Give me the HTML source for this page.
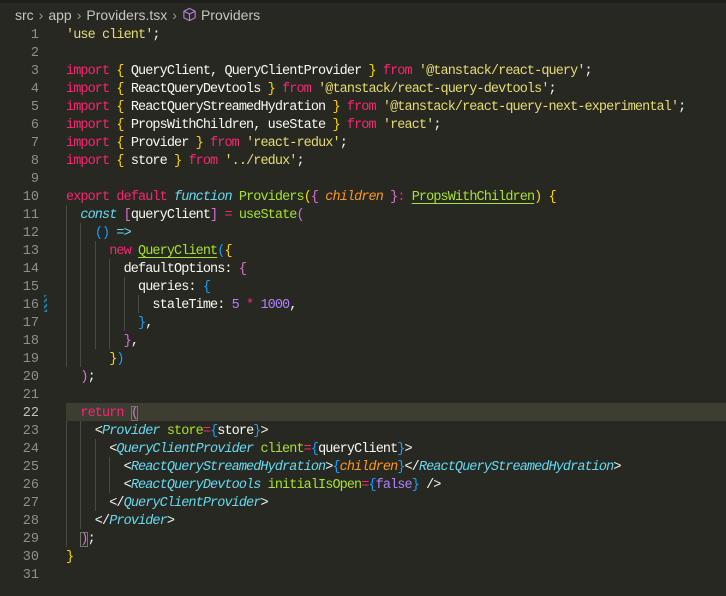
<!DOCTYPE html>
<html><head><meta charset="utf-8"><style>
html,body{margin:0;padding:0;background:#272822;width:726px;height:596px;overflow:hidden}
body{position:relative;font-family:"Liberation Mono",monospace;font-size:13.5px;letter-spacing:-0.9px;color:#f8f8f2}
.tabs{position:absolute;top:0;left:0;width:726px;height:3px;background:#1e1f1c}
.bc{position:absolute;top:6px;left:15px;font-family:"Liberation Sans",sans-serif;font-size:14px;letter-spacing:0;color:#c6c6c0;white-space:pre;line-height:18px}
.bc .s{color:#9a9a94;margin:0 5px}
.ln{position:absolute;left:0;width:39px;text-align:right;color:#90908a;height:18px;line-height:18px;letter-spacing:0;font-size:13.5px;padding-top:2px;box-sizing:border-box}
.l{position:absolute;left:66px;white-space:pre;height:18px;line-height:18px;padding-top:2px;box-sizing:border-box}
.hl{position:absolute;left:66px;width:660px;top:403px;height:18px;background:#3e3d32}
.g{position:absolute;width:1px;background:#4a4a44}
.k{color:#f92672}.s1{color:#e6db74}.f{color:#a6e22e}.t{color:#66d9ef;font-style:italic}
.p{color:#fd971f;font-style:italic}.n{color:#ae81ff}.y{color:#ffd700}.m{color:#da70d6}.b{color:#179fff}
.u{text-decoration:underline;text-decoration-color:#a6e22e;text-underline-offset:3px}
.box{outline:1px solid #75756c;outline-offset:-1px}
</style></head><body>
<div class="tabs"></div>
<div class="bc">src<span class="s">›</span>app<span class="s">›</span>Providers.tsx<span class="s">›</span><svg width="15" height="15" viewBox="0 0 16 16" style="vertical-align:-2px;margin-right:4px"><path d="M8 1.5 14 4.5v7L8 14.5 2 11.5v-7z M2 4.5 8 7.5 14 4.5 M8 7.5v7" fill="none" stroke="#b180d7" stroke-width="1.2" stroke-linejoin="round"/></svg>Providers</div>
<div class="hl"></div>
<div style="position:absolute;left:44px;top:295px;width:3px;height:17px;background:repeating-linear-gradient(135deg,#1b81a8 0 2px,transparent 2px 4px)"></div>
<div class="g" style="left:66px;top:205px;height:162px"></div>
<div class="g" style="left:80px;top:223px;height:144px"></div>
<div class="g" style="left:95px;top:241px;height:108px"></div>
<div class="g" style="left:109px;top:259px;height:90px"></div>
<div class="g" style="left:124px;top:277px;height:54px"></div>
<div class="g" style="left:138px;top:295px;height:18px"></div>
<div class="g" style="left:66px;top:421px;height:126px"></div>
<div class="g" style="left:80px;top:421px;height:108px"></div>
<div class="g" style="left:95px;top:439px;height:72px"></div>
<div class="g" style="left:109px;top:457px;height:36px"></div>

<div class="ln" style="top:25px">1</div><div class="l" style="top:25px"><span class="s1">'use client'</span>;</div>
<div class="ln" style="top:43px">2</div>
<div class="ln" style="top:61px">3</div><div class="l" style="top:61px"><span class="k">import</span> <span class="y">{</span> QueryClient, QueryClientProvider <span class="y">}</span> <span class="k">from</span> <span class="s1">'@tanstack/react-query'</span>;</div>
<div class="ln" style="top:79px">4</div><div class="l" style="top:79px"><span class="k">import</span> <span class="y">{</span> ReactQueryDevtools <span class="y">}</span> <span class="k">from</span> <span class="s1">'@tanstack/react-query-devtools'</span>;</div>
<div class="ln" style="top:97px">5</div><div class="l" style="top:97px"><span class="k">import</span> <span class="y">{</span> ReactQueryStreamedHydration <span class="y">}</span> <span class="k">from</span> <span class="s1">'@tanstack/react-query-next-experimental'</span>;</div>
<div class="ln" style="top:115px">6</div><div class="l" style="top:115px"><span class="k">import</span> <span class="y">{</span> PropsWithChildren, useState <span class="y">}</span> <span class="k">from</span> <span class="s1">'react'</span>;</div>
<div class="ln" style="top:133px">7</div><div class="l" style="top:133px"><span class="k">import</span> <span class="y">{</span> Provider <span class="y">}</span> <span class="k">from</span> <span class="s1">'react-redux'</span>;</div>
<div class="ln" style="top:151px">8</div><div class="l" style="top:151px"><span class="k">import</span> <span class="y">{</span> store <span class="y">}</span> <span class="k">from</span> <span class="s1">'../redux'</span>;</div>
<div class="ln" style="top:169px">9</div>
<div class="ln" style="top:187px">10</div><div class="l" style="top:187px"><span class="k">export</span> <span class="k">default</span> <span class="t">function</span> <span class="f">Providers</span><span class="y">(</span><span class="m">{</span> <span class="p">children</span> <span class="m">}</span><span class="k">:</span> <span class="f u">PropsWithChildren</span><span class="y">)</span> <span class="y">{</span></div>
<div class="ln" style="top:205px">11</div><div class="l" style="top:205px">  <span class="t">const</span> <span class="m">[</span>queryClient<span class="m">]</span> <span class="k">=</span> <span class="f">useState</span><span class="m">(</span></div>
<div class="ln" style="top:223px">12</div><div class="l" style="top:223px">    <span class="b">()</span> <span class="t" style="font-style:normal">=&gt;</span></div>
<div class="ln" style="top:241px">13</div><div class="l" style="top:241px">      <span class="k">new</span> <span class="f u">QueryClient</span><span class="b">(</span><span class="y">{</span></div>
<div class="ln" style="top:259px">14</div><div class="l" style="top:259px">        defaultOptions: <span class="m">{</span></div>
<div class="ln" style="top:277px">15</div><div class="l" style="top:277px">          queries: <span class="b">{</span></div>
<div class="ln" style="top:295px">16</div><div class="l" style="top:295px">            staleTime: <span class="n">5</span> <span class="k">*</span> <span class="n">1000</span>,</div>
<div class="ln" style="top:313px">17</div><div class="l" style="top:313px">          <span class="b">}</span>,</div>
<div class="ln" style="top:331px">18</div><div class="l" style="top:331px">        <span class="m">}</span>,</div>
<div class="ln" style="top:349px">19</div><div class="l" style="top:349px">      <span class="y">}</span><span class="b">)</span></div>
<div class="ln" style="top:367px">20</div><div class="l" style="top:367px">  <span class="m">)</span>;</div>
<div class="ln" style="top:385px">21</div>
<div class="ln" style="top:403px;color:#c2c2bf">22</div><div class="l" style="top:403px">  <span class="k">return</span> <span class="m box">(</span></div>
<div class="ln" style="top:421px">23</div><div class="l" style="top:421px">    &lt;<span class="t">Provider</span> <span class="f">store</span><span class="k">=</span><span class="b">{</span>store<span class="b">}</span>&gt;</div>
<div class="ln" style="top:439px">24</div><div class="l" style="top:439px">      &lt;<span class="t">QueryClientProvider</span> <span class="f">client</span><span class="k">=</span><span class="b">{</span>queryClient<span class="b">}</span>&gt;</div>
<div class="ln" style="top:457px">25</div><div class="l" style="top:457px">        &lt;<span class="t">ReactQueryStreamedHydration</span>&gt;<span class="b">{</span><span class="p">children</span><span class="b">}</span>&lt;/<span class="t">ReactQueryStreamedHydration</span>&gt;</div>
<div class="ln" style="top:475px">26</div><div class="l" style="top:475px">        &lt;<span class="t">ReactQueryDevtools</span> <span class="f">initialIsOpen</span><span class="k">=</span><span class="b">{</span><span class="n">false</span><span class="b">}</span> /&gt;</div>
<div class="ln" style="top:493px">27</div><div class="l" style="top:493px">      &lt;/<span class="t">QueryClientProvider</span>&gt;</div>
<div class="ln" style="top:511px">28</div><div class="l" style="top:511px">    &lt;/<span class="t">Provider</span>&gt;</div>
<div class="ln" style="top:529px">29</div><div class="l" style="top:529px">  <span class="m box">)</span>;</div>
<div class="ln" style="top:547px">30</div><div class="l" style="top:547px"><span class="y">}</span></div>
<div class="ln" style="top:565px">31</div>
</body></html>
